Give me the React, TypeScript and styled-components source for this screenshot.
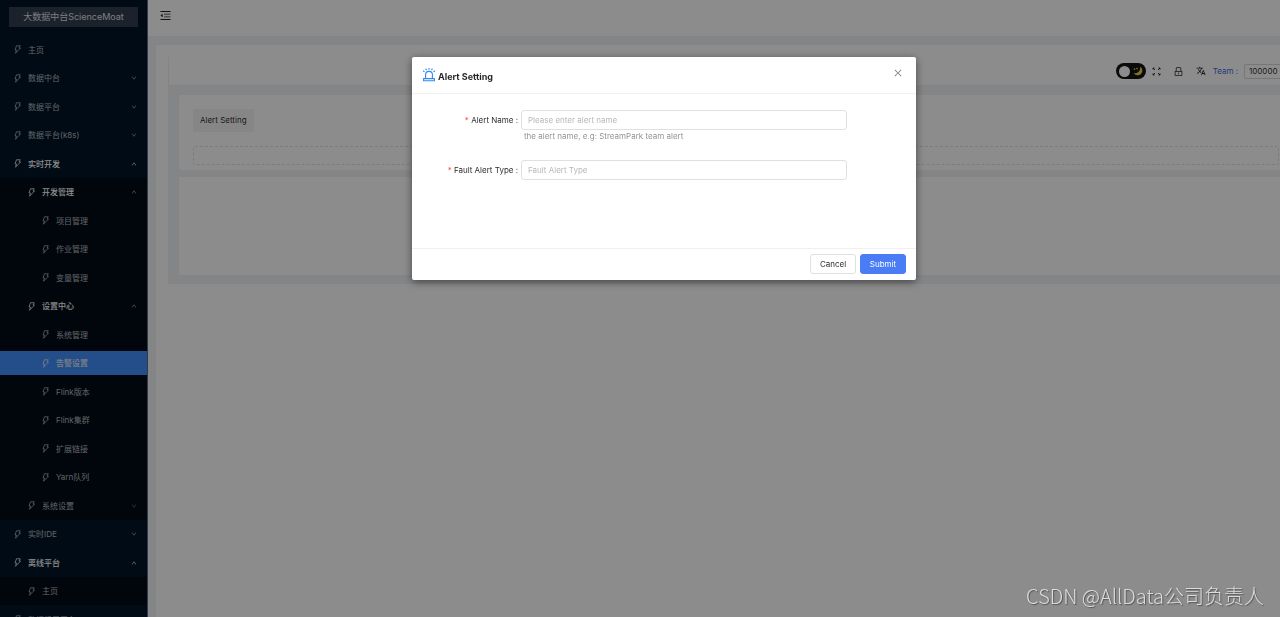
import React from 'react';
import styled, { createGlobalStyle, css } from 'styled-components';
import {
  AiOutlineClose,
  AiOutlineDown,
  AiOutlineLock,
  AiOutlineMenuFold,
  AiOutlineUp,
} from 'react-icons/ai';
import { MdTranslate } from 'react-icons/md';

const GlobalStyle = createGlobalStyle`
  * { box-sizing: border-box; }
  html, body { height: 100%; }
  body {
    margin: 0;
    overflow: hidden;
    background: #fff;
    color: rgba(0, 0, 0, 0.85);
    font-family: Inter, 'Noto Sans CJK SC', sans-serif;
    font-size: 8px;
    line-height: 12px;
  }
  button, input { font: inherit; color: inherit; }
  svg { display: block; flex: none; }
`;

const Page = styled.div`
  display: flex;
  height: 100vh;
  overflow: hidden;
`;

const Sidebar = styled.aside`
  flex: none;
  width: 148px;
  overflow: hidden;
  background: #001529;
  border-right: 1px solid #5d6b7b;
`;

const Brand = styled.h1`
  display: flex;
  align-items: center;
  justify-content: center;
  height: 20px;
  margin: 7px 9px 8px;
  background: #333f50;
  color: #dfe2e6;
  font-size: 9px;
  font-weight: 400;
  white-space: nowrap;
`;

const MenuList = styled.ul`
  margin: 0;
  padding: 0;
  list-style: none;
`;

const MenuRow = styled.li<{ $sub: boolean }>`
  display: flex;
  align-items: center;
  height: 28px;
  background: ${(p) => (p.$sub ? '#000c17' : 'transparent')};
  &:nth-child(odd) { height: 29px; }
`;

const MenuLink = styled.a<{ $level: number; $tone?: string }>`
  display: flex;
  align-items: center;
  gap: 6px;
  width: 100%;
  height: 24px;
  padding: 0 10px 0 ${(p) => 13 + p.$level * 14}px;
  color: rgba(255, 255, 255, 0.7);
  text-decoration: none;
  ${(p) => p.$tone === 'open' && css`color: #fff; font-weight: 500;`}
  ${(p) => p.$tone === 'selected' && css`background: #438ffa; color: #e4ecf8; font-weight: 500;`}
`;

const MenuText = styled.span`
  flex: 1;
  white-space: nowrap;
`;

const Arrow = styled.span<{ $dim: boolean }>`
  opacity: ${(p) => (p.$dim ? 0.7 : 1)};
`;

const Main = styled.main`
  flex: 1;
  min-width: 0;
  display: flex;
  flex-direction: column;
  background: #f0f2f5;
`;

const TopBar = styled.header`
  flex: none;
  height: 36px;
  padding: 9px 11px;
  background: #fff;
`;

const IconButton = styled.button`
  display: flex;
  align-items: center;
  justify-content: center;
  padding: 0;
  border: 0;
  background: none;
`;

const Frame = styled.div`
  flex: 1;
  margin: 9px 0 0 8px;
  padding: 12px 0 0 12px;
  background: #fff;
`;

const ToolBar = styled.div`
  display: flex;
  align-items: center;
  justify-content: flex-end;
  height: 29px;
  border-left: 1px solid #f0f0f0;
  border-bottom: 1px solid #eee;
  overflow: hidden;
`;

const Tools = styled.div`
  display: flex;
  align-items: center;
  gap: 12px;
  margin: 0 7px 0 6px;
`;

const ThemeSwitch = styled.button`
  display: flex;
  align-items: center;
  justify-content: space-between;
  width: 30px;
  height: 16px;
  padding: 0 3px;
  border: 0;
  border-radius: 8px;
  background: #151515;
`;

const Knob = styled.span`
  width: 11px;
  height: 11px;
  border-radius: 50%;
  background: #fff;
`;

const TeamLabel = styled.label`
  display: flex;
  align-items: center;
  gap: 6px;
  color: #3f6fe8;
  white-space: nowrap;
`;

const TeamInput = styled.input`
  width: 36px;
  height: 15px;
  padding: 0 0 0 4px;
  border: 1px solid #d9d9d9;
  border-right: 0;
  border-radius: 2px 0 0 2px;
  background: #fff;
  color: rgba(0, 0, 0, 0.85);
`;

const Content = styled.div`
  display: flex;
  flex-direction: column;
  gap: 7px;
  padding: 9px 0 9px 11px;
  background: #f0f2f5;
`;

const Card = styled.section<{ $height: number }>`
  min-height: ${(p) => p.$height}px;
  padding: 14px 1px 5px 14px;
  border-radius: 2px 0 0 2px;
  background: #fff;
`;

const CardTitle = styled.h2`
  width: max-content;
  margin: 0 0 14px;
  padding: 5px 7px;
  background: #f5f5f5;
  font-size: 8px;
  line-height: 13px;
  font-weight: 400;
`;

const AddButton = styled.button`
  display: block;
  width: 100%;
  height: 19px;
  border: 1px dashed #e2e2e2;
  border-radius: 2px;
  background: #fff;
`;

const Watermark = styled.div`
  position: fixed;
  right: 16px;
  bottom: 6px;
  z-index: 3;
  color: #dcdcdc;
  font: 300 20px/30px 'Noto Sans CJK SC', sans-serif;
  text-shadow: 1px 1px 1px #555;
  white-space: nowrap;
`;

const Overlay = styled.div`
  position: fixed;
  inset: 0;
  z-index: 2;
  display: flex;
  align-items: flex-start;
  justify-content: center;
  padding: 57px 0 0 48px;
  background: rgba(0, 0, 0, 0.45);
`;

const Dialog = styled.div`
  width: 504px;
  border-radius: 2px;
  background: #fff;
  box-shadow: 0 2px 8px rgba(0, 0, 0, 0.5);
`;

const DialogHeader = styled.header`
  display: flex;
  align-items: center;
  gap: 2px;
  height: 37px;
  padding: 0 13px 0 10px;
  border-bottom: 1px solid #f0f0f0;
`;

const DialogTitle = styled.h2`
  flex: 1;
  margin: 3px 0 0;
  font-size: 9px;
  line-height: 14px;
  font-weight: 700;
`;

const CloseButton = styled(IconButton)`
  height: 10px;
  margin-bottom: 4px;
`;

const DialogForm = styled.form`
  margin: 0;
`;

const Fields = styled.div`
  display: grid;
  gap: 18px;
  min-height: 154px;
  padding: 16px 69px 0 10px;
  align-content: start;
`;

const Field = styled.div`
  display: grid;
  grid-template-columns: 96px 1fr;
  column-gap: 3px;
`;

const FieldLabel = styled.label`
  line-height: 20px;
  text-align: right;
  white-space: nowrap;
  &::before { content: '* '; color: #ff4d4f; }
`;

const TextInput = styled.input`
  width: 100%;
  height: 20px;
  padding: 0 6px;
  border: 1px solid #e0e0e0;
  border-radius: 3px;
  background: #fff;
  &::placeholder { color: #b8b8b8; opacity: 1; }
`;

const Hint = styled.small`
  grid-column: 2;
  padding-left: 3px;
  color: rgba(0, 0, 0, 0.45);
  font-size: 8px;
  line-height: 12px;
`;

const DialogFooter = styled.footer`
  display: flex;
  justify-content: flex-end;
  gap: 4px;
  padding: 5px 10px 6px;
  border-top: 1px solid #f0f0f0;
`;

const Action = styled.button<{ $primary?: boolean }>`
  width: 46px;
  height: 20px;
  padding: 0;
  border: 1px solid ${(p) => (p.$primary ? '#4a7cf6' : '#e0e0e0')};
  border-radius: 3px;
  background: ${(p) => (p.$primary ? '#4a7cf6' : '#fff')};
  color: ${(p) => (p.$primary ? '#fff' : 'rgba(0, 0, 0, 0.85)')};
`;

type Item = {
  text: string;
  level: number;
  sub?: boolean;
  arrow?: 'up' | 'down';
  tone?: 'open' | 'selected';
};

const items: Item[] = [
  { text: '主页', level: 0 },
  { text: '数据中台', level: 0, arrow: 'down' },
  { text: '数据平台', level: 0, arrow: 'down' },
  { text: '数据平台(k8s)', level: 0, arrow: 'down' },
  { text: '实时开发', level: 0, arrow: 'up', tone: 'open' },
  { text: '开发管理', level: 1, sub: true, arrow: 'up', tone: 'open' },
  { text: '项目管理', level: 2, sub: true },
  { text: '作业管理', level: 2, sub: true },
  { text: '变量管理', level: 2, sub: true },
  { text: '设置中心', level: 1, sub: true, arrow: 'up', tone: 'open' },
  { text: '系统管理', level: 2, sub: true },
  { text: '告警设置', level: 2, sub: true, tone: 'selected' },
  { text: 'Flink版本', level: 2, sub: true },
  { text: 'Flink集群', level: 2, sub: true },
  { text: '扩展链接', level: 2, sub: true },
  { text: 'Yarn队列', level: 2, sub: true },
  { text: '系统设置', level: 1, sub: true, arrow: 'down' },
  { text: '实时IDE', level: 0, arrow: 'down' },
  { text: '离线平台', level: 0, arrow: 'up', tone: 'open' },
  { text: '主页', level: 1, sub: true },
  { text: '数据质量平台', level: 0, arrow: 'down' },
];

const BoltIcon = () => (
  <svg width="9" height="9" viewBox="0 0 18 18" fill="none" stroke="currentColor" strokeWidth="1.5" strokeLinejoin="round" aria-hidden="true">
    <path d="M7 1.500h7.500L12 6h3L5 16.500l2-6.500H4z" />
  </svg>
);

const AlarmIcon = () => (
  <svg width="14" height="16" viewBox="0 0 14 16" fill="none" stroke="#2f86f6" strokeWidth="1.1" aria-hidden="true">
    <path d="M3.6 11.4V7.8a3.4 3.4 0 0 1 6.8 0v3.6M1.6 11.6h10.8v2.2H1.6z" strokeLinejoin="round" />
    <path d="M7 1v1.800M3.600 1.600l.9 1.500M10.400 1.600l-.9 1.500M1 3.800l1.500.9M13 3.800l-1.500.9" />
  </svg>
);

const MoonIcon = () => (
  <svg width="10" height="10" viewBox="0 0 20 20" fill="#f5cf3c" aria-hidden="true">
    <path d="M14 1a9.500 9.500 0 1 1-13 13c8 2 15-5 13-13z" />
    <circle cx="3" cy="6" r="1.700" />
    <circle cx="8" cy="5" r="1.700" />
  </svg>
);

const FullscreenIcon = () => (
  <svg width="9" height="9" viewBox="0 0 18 18" fill="none" stroke="#222" strokeWidth="1.800" aria-hidden="true">
    <path d="M2 5V2h3M13 2h3v3M16 13v3h-3M5 16H2v-3M2 2l4 4M16 2l-4 4M16 16l-4-4M2 16l4-4" />
  </svg>
);

export default function App() {
  return (
    <>
      <GlobalStyle />
      <Page>
        <Sidebar>
          <Brand>大数据中台ScienceMoat</Brand>
          <nav>
            <MenuList>
              {items.map((item, i) => (
                <MenuRow key={i} $sub={!!item.sub}>
                  <MenuLink href="#" $level={item.level} $tone={item.tone}>
                    <BoltIcon />
                    <MenuText>{item.text}</MenuText>
                    {item.arrow && (
                      <Arrow $dim={item.level > 0}>
                        {item.arrow === 'down' ? <AiOutlineDown size={6} /> : <AiOutlineUp size={6} />}
                      </Arrow>
                    )}
                  </MenuLink>
                </MenuRow>
              ))}
            </MenuList>
          </nav>
        </Sidebar>
        <Main>
          <TopBar>
            <IconButton aria-label="Collapse menu"><AiOutlineMenuFold size={13} /></IconButton>
          </TopBar>
          <Frame>
            <ToolBar>
              <ThemeSwitch aria-label="Dark mode"><Knob /><MoonIcon /></ThemeSwitch>
              <Tools>
                <IconButton aria-label="Fullscreen"><FullscreenIcon /></IconButton>
                <IconButton aria-label="Lock screen"><AiOutlineLock size={11} /></IconButton>
                <IconButton aria-label="Language"><MdTranslate size={10} /></IconButton>
              </Tools>
              <TeamLabel>Team :<TeamInput defaultValue="100000" /></TeamLabel>
            </ToolBar>
            <Content>
              <Card $height={75}>
                <CardTitle>Alert Setting</CardTitle>
                <AddButton aria-label="Add alert" />
              </Card>
              <Card $height={98} />
            </Content>
          </Frame>
        </Main>
      </Page>
      <Overlay>
        <Dialog role="dialog" aria-labelledby="dialog-title">
          <DialogHeader>
            <AlarmIcon />
            <DialogTitle id="dialog-title">Alert Setting</DialogTitle>
            <CloseButton aria-label="Close"><AiOutlineClose size={10} color="#7d7d7d" /></CloseButton>
          </DialogHeader>
          <DialogForm>
            <Fields>
              <Field>
                <FieldLabel htmlFor="alert-name">Alert Name :</FieldLabel>
                <TextInput id="alert-name" placeholder="Please enter alert name" />
                <Hint>the alert name, e.g: StreamPark team alert</Hint>
              </Field>
              <Field>
                <FieldLabel htmlFor="alert-type">Fault Alert Type :</FieldLabel>
                <TextInput id="alert-type" placeholder="Fault Alert Type" />
              </Field>
            </Fields>
            <DialogFooter>
              <Action type="button">Cancel</Action>
              <Action type="button" $primary>Submit</Action>
            </DialogFooter>
          </DialogForm>
        </Dialog>
      </Overlay>
      <Watermark>CSDN @AllData公司负责人</Watermark>
    </>
  );
}
